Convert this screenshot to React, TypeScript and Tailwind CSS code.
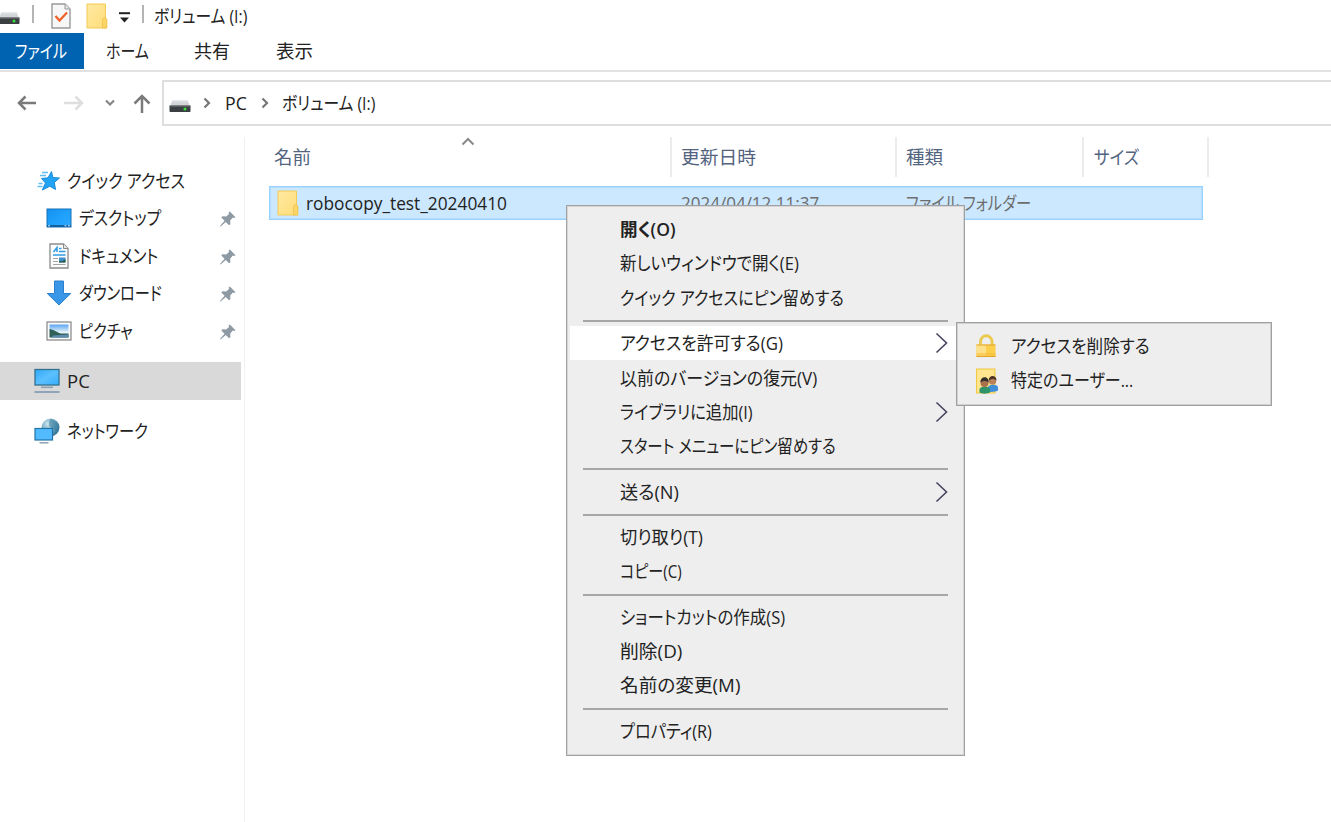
import { useLayoutEffect, useRef, useState } from 'react';
import type { ReactNode } from 'react';

type LabelProps = { text: string; w: number; className?: string };

// UI text condensed (or stretched) horizontally so that it takes exactly w pixels
function Label({ text, w, className = '' }: LabelProps) {
  const ref = useRef<HTMLSpanElement>(null);
  const [scale, setScale] = useState(1);

  useLayoutEffect(() => {
    if (ref.current) setScale(w / ref.current.offsetWidth);
  }, [text, w]);

  return (
    <span className={`block shrink-0 ${className}`} style={{ width: w }}>
      <span
        ref={ref}
        className="inline-block origin-left whitespace-pre [font-feature-settings:'palt']"
        style={{ transform: `scaleX(${scale})` }}
      >
        {text}
      </span>
    </span>
  );
}

function DriveIcon() {
  return (
    <svg className="block shrink-0" width="22" height="14" viewBox="0 0 22 14">
      <path d="M3.5 1h15L21 7H1z" fill="#d3d5d8" />
      <path d="M3.5 1h15l.6 1.5H2.9z" fill="#e8e9ec" />
      <rect x="0.5" y="6.5" width="21" height="6.5" rx="0.8" fill="#3c3f42" />
      <rect x="0.5" y="6.5" width="21" height="1" fill="#77797c" />
      <circle cx="16" cy="10" r="1.5" fill="#35e03a" />
    </svg>
  );
}

function FolderIcon() {
  return (
    <svg className="block shrink-0" width="22" height="26" viewBox="0 0 22 26">
      <defs>
        <linearGradient id="folder" x1="0" y1="0" x2="1" y2="1">
          <stop offset="0" stopColor="#ffe9a2" />
          <stop offset="1" stopColor="#ffdc78" />
        </linearGradient>
      </defs>
      <path d="M1 1h18.500v14l1.200 1.500V25H1z" fill="url(#folder)" stroke="#f3ca55" />
      <path d="M16.500 25v-8.500l1.200-1.800h1.300l1.700 1.800V25z" fill="#fbd667" stroke="#efc24a" strokeWidth="0.8" />
    </svg>
  );
}

function CheckPageIcon() {
  return (
    <svg className="block shrink-0" width="20" height="26" viewBox="0 0 20 26">
      <path d="M1 1h13l5 5v19H1z" fill="#f7f7f7" stroke="#9a9a9a" strokeWidth="1.4" />
      <path d="M14 1v5h5" fill="#e4e4e4" stroke="#9a9a9a" />
      <path d="M4.500 13l4 4.500L16 9.500" fill="none" stroke="#f0622a" strokeWidth="2.300" />
    </svg>
  );
}

function Arrow({ d, color, w, h, stroke = 2.2 }: { d: string; color: string; w: number; h: number; stroke?: number }) {
  return (
    <svg className="block shrink-0" width={w} height={h} viewBox={`0 0 ${w} ${h}`}>
      <path d={d} fill="none" stroke={color} strokeWidth={stroke} />
    </svg>
  );
}

function StarIcon() {
  return (
    <svg className="block" width="24" height="22" viewBox="0 0 24 22">
      <path
        d="M14.500 1.500l1.300 6 6.700.5-5.200 4.500 1.200 7-5.700-3.300-7.500 3.800 3.200-7-4-4.500 6.500-.7z"
        fill="#23a3f4"
        stroke="#1a8ad8"
      />
      <path d="M5 2.500h6M3 5.500h6M1.500 13.500h4M.5 16.500h5" stroke="#62bdf2" strokeWidth="1.300" />
    </svg>
  );
}

function DesktopIcon() {
  return (
    <svg className="block" width="26" height="26" viewBox="0 0 26 26">
      <defs>
        <linearGradient id="desk" x1="0" y1="0" x2="1" y2="1">
          <stop offset="0" stopColor="#1590f0" />
          <stop offset="0.5" stopColor="#1ea0fb" />
          <stop offset="1" stopColor="#2fa9ff" />
        </linearGradient>
      </defs>
      <rect x="1" y="4" width="24" height="18" fill="url(#desk)" stroke="#1672b8" />
      <rect x="1" y="20" width="24" height="2" fill="#11609f" />
      <path d="M2 20.800h2M18.500 20.800h2M22 20.800h2" stroke="#d6efff" />
    </svg>
  );
}

function DocumentIcon() {
  return (
    <svg className="block" width="26" height="26" viewBox="0 0 26 26">
      <path d="M4 1h13.500L22 5.500V25H4z" fill="#fcfcfc" stroke="#8b8b8b" strokeWidth="1.3" />
      <path d="M17.500 1v4.500H22" fill="#e5e5e5" stroke="#8b8b8b" />
      <path d="M7.500 9l3.500-4.500v4.500M13 5.500h2.500M13 8.500h6.500M7 12h12.500" fill="none" stroke="#2f9be6" strokeWidth="1.500" />
      <path d="M7 15.500h5M7 18.500h5M7 21.500h12.500" stroke="#a5a5a5" />
      <rect x="13" y="14.500" width="6.500" height="5" fill="#3f8fd0" />
      <path d="M13 19.500v-1.500l3 .2 3.500-2v3.300z" fill="#2b5a44" />
    </svg>
  );
}

function DownloadIcon() {
  return (
    <svg className="block" width="26" height="26" viewBox="0 0 26 26">
      <path d="M8.500 1h9v12.500h7.200L13 25 1.300 13.500h7.200z" fill="#3a96e6" stroke="#2a7fce" />
    </svg>
  );
}

function PictureIcon() {
  return (
    <svg className="block" width="26" height="26" viewBox="0 0 26 26">
      <defs>
        <linearGradient id="sky" x1="0" y1="0" x2="0" y2="1">
          <stop offset="0" stopColor="#5aa5f2" />
          <stop offset="0.6" stopColor="#e6f3f8" />
        </linearGradient>
      </defs>
      <rect x="1" y="4" width="24" height="18" fill="#fafafa" stroke="#8e8e8e" strokeWidth="1.300" />
      <rect x="3.500" y="6.500" width="19" height="13" fill="url(#sky)" />
      <path d="M3.500 11c4 .5 6 2.500 11 4.500h8v4h-19z" fill="#2f6156" />
      <path d="M7 17.500l15.500-1v3H5z" fill="#5d8bb0" />
    </svg>
  );
}

function PcIcon() {
  return (
    <svg className="block" width="26" height="26" viewBox="0 0 26 26">
      <defs>
        <linearGradient id="screen" x1="0" y1="0" x2="1" y2="1">
          <stop offset="0" stopColor="#2fa8fa" />
          <stop offset="0.5" stopColor="#5cc0ff" />
          <stop offset="1" stopColor="#36adfb" />
        </linearGradient>
      </defs>
      <rect x="1" y="1.500" width="24" height="15.500" fill="url(#screen)" stroke="#33718f" strokeWidth="1.300" />
      <path d="M7 19.300h12" stroke="#8fa3b3" strokeWidth="1.600" />
      <path d="M0.500 24h25" stroke="#8fa3b9" strokeWidth="2" />
    </svg>
  );
}

function NetworkIcon() {
  return (
    <svg className="block" width="26" height="26" viewBox="0 0 26 26">
      <defs>
        <radialGradient id="globe" cx="0.35" cy="0.3" r="0.8">
          <stop offset="0" stopColor="#cfe6ee" />
          <stop offset="0.5" stopColor="#6fa9c2" />
          <stop offset="1" stopColor="#2c6d92" />
        </radialGradient>
      </defs>
      <circle cx="16.500" cy="9.500" r="9" fill="url(#globe)" />
      <path d="M17 1c-3 3-3 7 1 9s3 4 2 7c4-3 6-7 5-11z" fill="#2f7396" opacity="0.5" />
      <rect x="1" y="10.500" width="17.500" height="11.500" fill="#52bbff" stroke="#2273a8" strokeWidth="1.200" />
      <path d="M5.500 24.800h9" stroke="#8fa3b3" strokeWidth="1.500" />
    </svg>
  );
}

function PinIcon() {
  return (
    <svg className="block shrink-0" width="18" height="18" viewBox="0 0 18 18">
      <path d="M10.800 1.500l5.700 5.700-1.300.8-1.300-.4-2.700 2.900.2 3.700-1.300 1.100-3.300-3.300-5.200 4.600-.6-.6 4.600-5.200-3.300-3.300 1.200-1.300 3.700.3 2.800-2.600-.3-1.300z" fill="#8d99a3" />
    </svg>
  );
}

function LockIcon() {
  return (
    <svg className="block shrink-0" width="24" height="26" viewBox="0 0 24 26">
      <path d="M5.500 13V8.500a5.500 5.500 0 0 1 11.500 0V13" fill="none" stroke="#e9c94f" strokeWidth="2.800" />
      <rect x="1.500" y="11.500" width="19" height="12.500" fill="#fbcf4b" />
      <rect x="1.500" y="11.500" width="9.500" height="12.500" fill="#fde08a" />
      <rect x="1.500" y="20" width="19" height="4" fill="#f6be3c" opacity="0.600" />
      <path d="M1.500 12h19M1.500 23.500h19" stroke="#e0a52c" />
    </svg>
  );
}

function UsersIcon() {
  return (
    <svg className="block shrink-0" width="24" height="26" viewBox="0 0 24 26">
      <rect x="1.500" y="1" width="18.500" height="24" fill="#ffe58e" stroke="#f0c844" />
      <path d="M13 24v-5c1-3 9-3 10 0v3.500c-2 1.500-6 1.500-10 1.500z" fill="#3f8fd8" />
      <circle cx="17.500" cy="13" r="3.700" fill="#b9825a" />
      <path d="M13.800 12.500c-.5-6 8-6 7.700 0-2-2-5-2.200-7.700 0z" fill="#4b3426" />
      <path d="M4.500 24.500V21c1-3.500 9.500-3.500 10.500 0v3.500c-3 1.500-8 1.500-10.500 0z" fill="#2f9468" />
      <circle cx="9.500" cy="15" r="4" fill="#a8714c" />
      <path d="M5.300 14.500c0-7 8.700-7 8.500 0-2-2-6-2-8.500 0z" fill="#33302b" />
    </svg>
  );
}

const quickItems: { text: string; w: number; icon: ReactNode }[] = [
  { text: 'デスクトップ', w: 82, icon: <DesktopIcon /> },
  { text: 'ドキュメント', w: 79, icon: <DocumentIcon /> },
  { text: 'ダウンロード', w: 83, icon: <DownloadIcon /> },
  { text: 'ピクチャ', w: 54, icon: <PictureIcon /> },
];

type MenuItem = { text: string; w: number; bold?: boolean; active?: boolean; sub?: boolean };

const menuGroups: MenuItem[][] = [
  [
    { text: '開く(O)', w: 56, bold: true },
    { text: '新しいウィンドウで開く(E)', w: 179 },
    { text: 'クイック アクセスにピン留めする', w: 224 },
  ],
  [
    { text: 'アクセスを許可する(G)', w: 163, active: true, sub: true },
    { text: '以前のバージョンの復元(V)', w: 197 },
    { text: 'ライブラリに追加(I)', w: 133, sub: true },
    { text: 'スタート メニューにピン留めする', w: 216 },
  ],
  [{ text: '送る(N)', w: 59, sub: true }],
  [
    { text: '切り取り(T)', w: 83 },
    { text: 'コピー(C)', w: 62 },
  ],
  [
    { text: 'ショートカットの作成(S)', w: 165 },
    { text: '削除(D)', w: 62 },
    { text: '名前の変更(M)', w: 120 },
  ],
  [{ text: 'プロパティ(R)', w: 92 }],
];

function ContextMenu() {
  return (
    <div className="absolute left-[566px] top-[205px] h-[551px] w-[399px] border border-[#a0a0a0] bg-[#eeeeee] px-[3px] pt-[6px] shadow-[inset_0_0_0_1px_#d6d6d6]">
      {menuGroups.map((group, i) => (
        <div key={i}>
          {i > 0 && (
            <div className="flex h-[11.2px] items-center pr-[13px] pl-[13px]">
              <div className="mt-px h-[2px] w-full bg-[#a6a6a6]" />
            </div>
          )}
          {group.map((item) => (
            <div
              key={item.text}
              className={`flex h-[34.3px] items-center justify-between pr-[13px] pl-[50px] ${item.active ? 'bg-white' : ''}`}
            >
              <Label text={item.text} w={item.w} className={item.bold ? 'font-semibold' : ''} />
              {item.sub && (
                <svg width="13" height="22" viewBox="0 0 13 22">
                  <path d="M1.500 1.500L11.500 11l-10 9.500" fill="none" stroke="#494560" strokeWidth="1.600" />
                </svg>
              )}
            </div>
          ))}
        </div>
      ))}
    </div>
  );
}

function SubMenu() {
  return (
    <div className="absolute left-[956px] top-[322px] h-[84px] w-[316px] border border-[#a0a0a0] bg-[#eeeeee] py-[6px] pl-[18px] shadow-[inset_0_0_0_1px_#d0d0d0]">
      <div className="flex h-[34.500px] items-center gap-[12px]">
        <LockIcon />
        <Label text="アクセスを削除する" w={139} className="-mt-px" />
      </div>
      <div className="flex h-[34.500px] items-center gap-[12px]">
        <UsersIcon />
        <Label text="特定のユーザー..." w={122} className="-mt-px" />
      </div>
    </div>
  );
}

function TitleBar() {
  return (
    <div className="flex h-[33px] items-start">
      <div className="-ml-[2px] mt-[11px]">
        <DriveIcon />
      </div>
      <div className="mt-[5px] ml-[12px] h-[18px] w-[2px] bg-[#b4b4b4]" />
      <div className="mt-[3px] ml-[17px]">
        <CheckPageIcon />
      </div>
      <div className="mt-[3px] ml-[15px]">
        <FolderIcon />
      </div>
      <svg className="mt-[12px] ml-[11px]" width="11" height="11" viewBox="0 0 11 11">
        <path d="M0 1.200h11" stroke="#222" strokeWidth="2" />
        <path d="M1 5.500h9l-4.500 5z" fill="#222" />
      </svg>
      <div className="mt-[5px] ml-[12px] h-[18px] w-[2px] bg-[#b4b4b4]" />
      <Label text="ボリューム (I:)" w={93} className="ml-[10px] leading-[31px]" />
    </div>
  );
}

function Ribbon() {
  return (
    <div className="flex h-[39px] border-b-2 border-[#e2e2e2] leading-[36px]">
      <div className="h-[36px] w-[84px] bg-[#0063b1] pl-[15px] text-white">
        <Label text="ファイル" w={52} />
      </div>
      <Label text="ホーム" w={43} className="ml-[22px]" />
      <Label text="共有" w={36} className="ml-[45px]" />
      <Label text="表示" w={37} className="ml-[46px]" />
    </div>
  );
}

function AddressBar() {
  return (
    <div className="flex h-[65px] items-start pt-[8px]">
      <div className="flex h-[46px] w-[162px] items-center pl-[17px]">
        <Arrow w={20} h={16} color="#7a7a7a" stroke={2.5} d="M8.500 1.500L2 8l6.500 6.500M2 8h17" />
        <div className="ml-[27px]">
          <Arrow w={20} h={16} color="#dedede" stroke={2.5} d="M11.500 1.500L18 8l-6.500 6.500M0 8h18" />
        </div>
        <div className="ml-[21px]">
          <Arrow w={10} h={10} color="#858585" d="M1 2.500L5 6.500l4-4" />
        </div>
        <div className="mt-[2px] ml-[18px]">
          <Arrow w={18} h={20} color="#7a7a7a" stroke={2.5} d="M1.500 9.500L9 2l7.500 7.500M9 2v17" />
        </div>
      </div>
      <div className="flex h-[46px] flex-1 items-center border-y-2 border-l-2 border-[#dedede] pl-[5px]">
        <div className="mt-[6px]">
          <DriveIcon />
        </div>
        <div className="ml-[12px]">
          <Arrow w={8} h={12} color="#777" d="M1.500 1.500L6 6l-4.500 4.500" />
        </div>
        <Label text="PC" w={22} className="ml-[14px]" />
        <div className="ml-[14px]">
          <Arrow w={8} h={12} color="#777" d="M1.500 1.500L6 6l-4.500 4.500" />
        </div>
        <Label text="ボリューム (I:)" w={93} className="ml-[13px]" />
      </div>
    </div>
  );
}

function Sidebar() {
  return (
    <aside className="h-[685px] w-[245px] shrink-0 border-r border-[#f0f0f0] pt-[25px]">
      <div className="flex h-[37.5px] items-center pl-[37px]">
        <StarIcon />
        <Label text="クイック アクセス" w={118} className="ml-[6px]" />
      </div>
      {quickItems.map((item) => (
        <div key={item.text} className="flex h-[37.5px] items-center pl-[46px]">
          {item.icon}
          <Label text={item.text} w={item.w} className="ml-[7px]" />
          <div className="mr-[7px] ml-auto pt-[2px]">
            <PinIcon />
          </div>
        </div>
      ))}
      <div className="mt-[12px] flex h-[38px] w-[241px] items-center bg-[#d9d9d9] pl-[34px]">
        <PcIcon />
        <Label text="PC" w={23} className="ml-[7px]" />
      </div>
      <div className="mt-[12px] flex h-[38px] items-center pl-[34px]">
        <NetworkIcon />
        <Label text="ネットワーク" w={81} className="ml-[7px]" />
      </div>
    </aside>
  );
}

function FileList() {
  return (
    <main className="flex-1 pl-[24px]">
      <div className="flex h-[40px] items-center text-[#53647f]">
        <div className="flex h-full w-[403px] items-center border-r-2 border-[#ececec] pl-[5px]">
          <Label text="名前" w={37} />
          <div className="-mt-[31px] ml-[150px]">
            <Arrow w={14} h={9} color="#8a8a8a" stroke={2} d="M1.500 7.500L7 2l5.500 5.500" />
          </div>
        </div>
        <div className="flex h-full w-[225px] items-center border-r-2 border-[#ececec] pl-[9px]">
          <Label text="更新日時" w={75} />
        </div>
        <div className="flex h-full w-[187px] items-center border-r-2 border-[#ececec] pl-[9px]">
          <Label text="種類" w={37} />
        </div>
        <div className="flex h-full w-[125px] items-center border-r-2 border-[#ececec] pl-[10px]">
          <Label text="サイズ" w={45} />
        </div>
      </div>
      <div className="mt-[9px] flex h-[34px] w-[934px] items-center border border-[#99d1ff] bg-[#cce8ff] pl-[7px] shadow-[inset_0_0_0_1px_#b4dcff]">
        <FolderIcon />
        <Label text="robocopy_test_20240410" w={201} className="ml-[7px]" />
        <Label text="2024/04/12 11:37" w={138} className="ml-[174px] text-[#6d6d6d]" />
        <Label text="ファイル フォルダー" w={125} className="ml-[87px] text-[#6d6d6d]" />
      </div>
    </main>
  );
}

export default function App() {
  return (
    <div className="relative h-[822px] w-[1331px] overflow-hidden bg-white font-['Open_Sans','Noto_Sans_CJK_JP',sans-serif] text-[18.5px] leading-[34px] text-[#222]">
      <TitleBar />
      <Ribbon />
      <AddressBar />
      <div className="flex">
        <Sidebar />
        <FileList />
      </div>
      <ContextMenu />
      <SubMenu />
    </div>
  );
}
